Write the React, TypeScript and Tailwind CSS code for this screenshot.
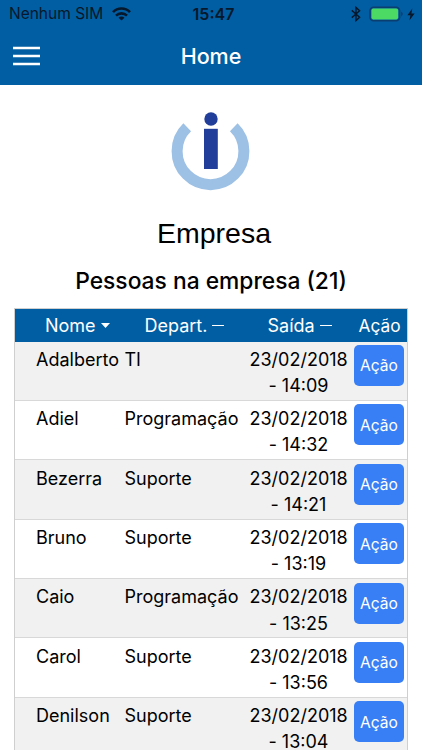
type PersonProps = {
  name: string;
  department: string;
  date: string;
  time: string;
}

const people: PersonProps[] = [
  { name: "Adalberto", department: "TI", date: "23/02/2018", time: "14:09" },
  { name: "Adiel", department: "Programação", date: "23/02/2018", time: "14:32" },
  { name: "Bezerra", department: "Suporte", date: "23/02/2018", time: "14:21" },
  { name: "Bruno", department: "Suporte", date: "23/02/2018", time: "13:19" },
  { name: "Caio", department: "Programação", date: "23/02/2018", time: "13:25" },
  { name: "Carol", department: "Suporte", date: "23/02/2018", time: "13:56" },
  { name: "Denilson", department: "Suporte", date: "23/02/2018", time: "13:04" },
];

const StatusBar = () => {
  return (
    <div className="grid h-7 grid-cols-3 items-center pl-[9px] pr-[7px] text-[#06182b]">
      <div className="flex items-center gap-[9px]">
        <span className="whitespace-nowrap text-[15.5px] leading-7">Nenhum SIM</span>
        <svg width="19" height="14" viewBox="0 0 19 14" className="shrink-0" fill="none" stroke="currentColor" strokeWidth="2.6">
          <path d="M1 5.1a12 12 0 0 1 17 0" />
          <path d="M4 8.6a7.8 7.8 0 0 1 11 0" />
          <path d="M9.5 13.6 6.5 10.7a4.2 4.2 0 0 1 6 0Z" fill="currentColor" stroke="none" />
        </svg>
      </div>
      <span className="pl-[3px] text-center text-[16px] font-semibold leading-7">15:47</span>
      <div className="flex items-center justify-end">
        <svg width="10" height="16" viewBox="0 0 10 16" fill="none" stroke="currentColor" strokeWidth="1.4">
          <path d="M.8 4.4 8.6 11.2 5 14.6V1.4L8.6 4.8.8 11.6" />
        </svg>
        <svg width="35" height="16" viewBox="0 0 35 16" className="ml-2">
          <rect x="1" y="1.2" width="29.6" height="13.6" rx="3.6" fill="none" stroke="#0a3d70" strokeWidth="1.5" />
          <rect x="2.4" y="2.6" width="26.8" height="10.8" rx="1.8" fill="#4cd964" />
          <path d="M32.2 5.6c1.9.8 1.9 4 0 4.8Z" fill="#0a3d70" />
        </svg>
        <svg width="8" height="13" viewBox="0 0 8 13" className="ml-[3px]" fill="currentColor">
          <path d="M5.3.5.4 7.2h3L2.4 12.5 7.6 5.4H4.4Z" />
        </svg>
      </div>
    </div>
  );
};

const Logo = () => {
  return (
    <svg width="80" height="80" viewBox="0 0 80 80" className="mx-auto">
      <path d="M16.2 16.3A33.4 33.4 0 1 0 62.8 16.3" fill="none" stroke="#9dc0e5" strokeWidth="11" />
      <circle cx="40" cy="8" r="6.7" fill="#213f9a" />
      <rect x="33" y="17.8" width="13.8" height="40.2" fill="#213f9a" />
    </svg>
  );
};

export default function App() {
  return (
    <div className="h-[750px] w-[422px] overflow-hidden bg-white font-['Inter',sans-serif] text-black">
      <header className="h-[84.5px] bg-[#025ea2]">
        <StatusBar />
        <div className="grid h-14 grid-cols-[1fr_auto_1fr] items-center px-[13px]">
          <button aria-label="Menu" className="w-[27px]">
            <svg width="27" height="20" viewBox="0 0 27 20" fill="none" stroke="white" strokeWidth="2.5">
              <path d="M0 2h27M0 10h27M0 18h27" />
            </svg>
          </button>
          <h1 className="text-[21.5px] font-medium text-white">Home</h1>
        </div>
      </header>

      <main className="px-[14px] pt-[26.5px]">
        <Logo />
        <h2 className="mt-[22px] pl-[6px] text-center font-['Liberation_Sans',sans-serif] text-[28.5px] leading-10">
          Empresa
        </h2>
        <h3 className="mt-3 text-center text-[22.8px] font-medium leading-8">
          Pessoas na empresa (21)
        </h3>

        <div className="mt-[11px] border border-[#cfcfcf] text-[18px]">
          <div className="grid h-[32.5px] grid-cols-[106px_125px_108px_1fr] items-center bg-[#025ea2] text-white">
            <span className="flex items-center gap-[5px] pl-[30px]">
              Nome
              <svg width="9" height="5" viewBox="0 0 9 5" fill="currentColor">
                <path d="M0 0h9L4.5 5Z" />
              </svg>
            </span>
            <span className="flex items-center gap-[5px] pl-[23.5px]">
              Depart.
              <span className="h-[1.5px] w-3 bg-white" />
            </span>
            <span className="flex items-center gap-[5px] pl-[21.5px]">
              Saída
              <span className="h-[1.5px] w-3 bg-white" />
            </span>
            <span className="pl-[4.5px] pt-px text-[17.3px]">Ação</span>
          </div>

          {people.map(({ name, department, date, time }: PersonProps) => (
            <div
              key={name}
              className="grid h-[59.4px] grid-cols-[88.5px_125px_98px_1fr] border-b border-[#d8d8d8] pl-[21px] leading-[26.3px] odd:bg-white even:bg-[#f1f1f1]"
            >
              <span className="pt-[5.3px]">{name}</span>
              <span className="pt-[5.3px]">{department}</span>
              <span className="pt-[5.3px] text-center">
                {date} - {time}
              </span>
              <span className="pl-[6.5px] pt-[3.5px]">
                <button className="h-[41px] w-[50px] rounded-[5px] bg-[#387ef5] pt-0.5 text-[15.6px] text-white">Ação</button>
              </span>
            </div>
          ))}
        </div>
      </main>
    </div>
  );
}
